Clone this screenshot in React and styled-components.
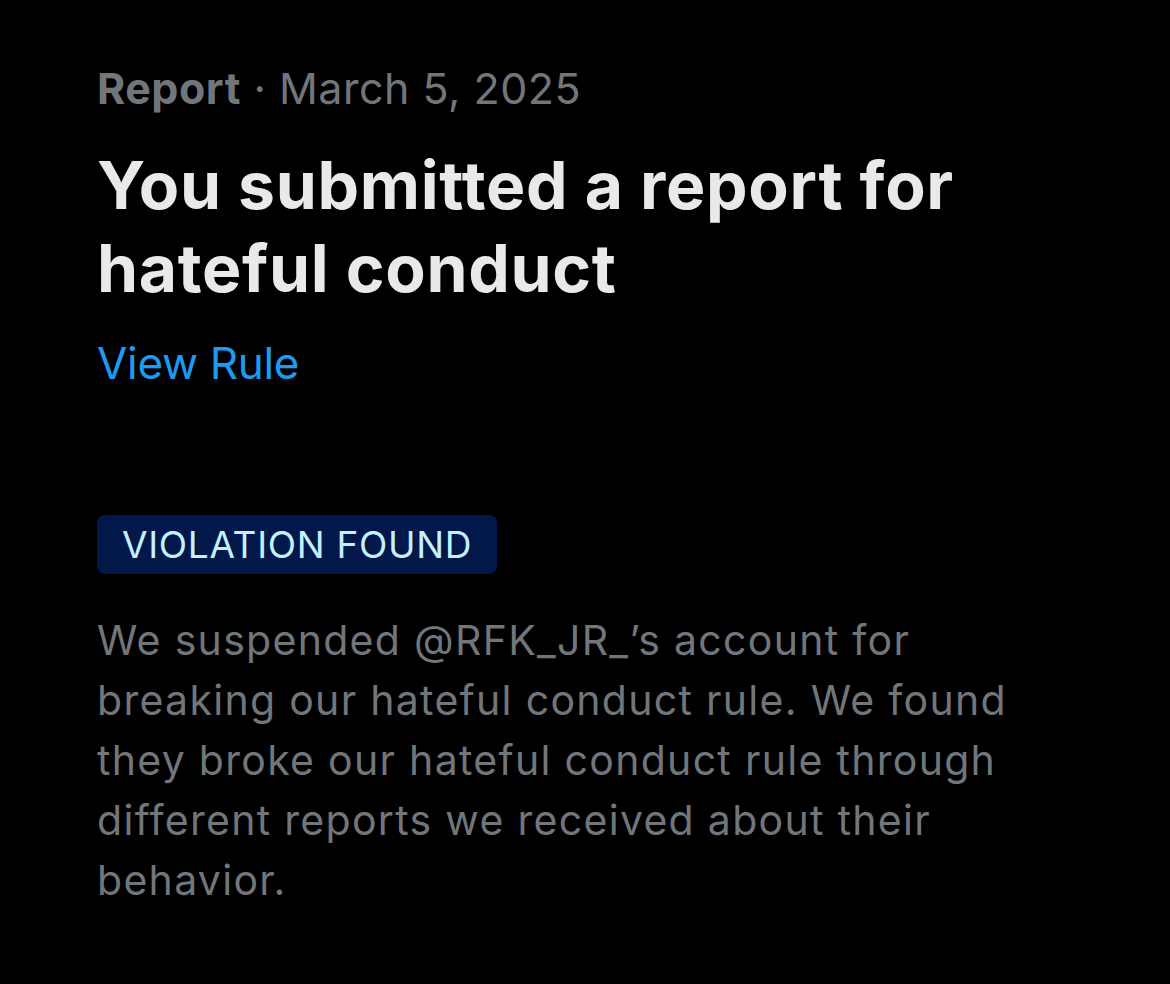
import React from "react";
import styled, { createGlobalStyle } from "styled-components";

// STYLED-COMPONENT
const GlobalStyle = createGlobalStyle`
  html, body {
    margin: 0;
    padding: 0;
    background: #000;
  }
  body {
    font-family: Inter, "Noto Sans", "Liberation Sans", sans-serif;
    -webkit-font-smoothing: antialiased;
  }
`;

const Page = styled.main`
  min-height: 984px;
  box-sizing: border-box;
  padding: 62px 97px 40px;
  background: #000;
  display: flex;
  flex-direction: column;
  align-items: flex-start;
`;

const Meta = styled.div`
  font-size: 43px;
  line-height: 52px;
  color: #71767b;
  font-weight: 400;
  letter-spacing: 0.5px;
`;

const Kind = styled.span`
  font-weight: 700;
`;

const Title = styled.h1`
  margin: 30px 0 0;
  font-size: 66px;
  line-height: 83px;
  font-weight: 700;
  color: #e7e9ea;
  letter-spacing: 0.7px;
`;

const RuleLink = styled.a`
  margin-top: 27px;
  font-size: 44px;
  line-height: 52px;
  color: #1d9bf0;
  text-decoration: none;
  letter-spacing: -0.3px;
`;

const Badge = styled.div`
  margin-top: 126px;
  height: 59px;
  box-sizing: border-box;
  padding: 0 25px;
  display: flex;
  align-items: center;
  border-radius: 8px;
  background: #02174a;
  color: #c4f0ff;
  font-size: 37px;
  letter-spacing: 0.7px;
`;

const Body = styled.p`
  margin: 36px 0 0;
  font-size: 41px;
  line-height: 60px;
  color: #71767b;
  letter-spacing: 1.3px;
`;

// COMPONENT
function App() {
  return (
    <>
      <GlobalStyle />
      <Page>
        <Meta>
          <Kind>Report</Kind> · March 5, 2025
        </Meta>
        <Title>You submitted a report for hateful conduct</Title>
        <RuleLink href="#">View Rule</RuleLink>
        <Badge>VIOLATION FOUND</Badge>
        <Body>
          We suspended @RFK_JR_’s account for breaking our hateful conduct
          rule. We found they broke our hateful conduct rule through different
          reports we received about their behavior.
        </Body>
      </Page>
    </>
  );
}

export default App;
